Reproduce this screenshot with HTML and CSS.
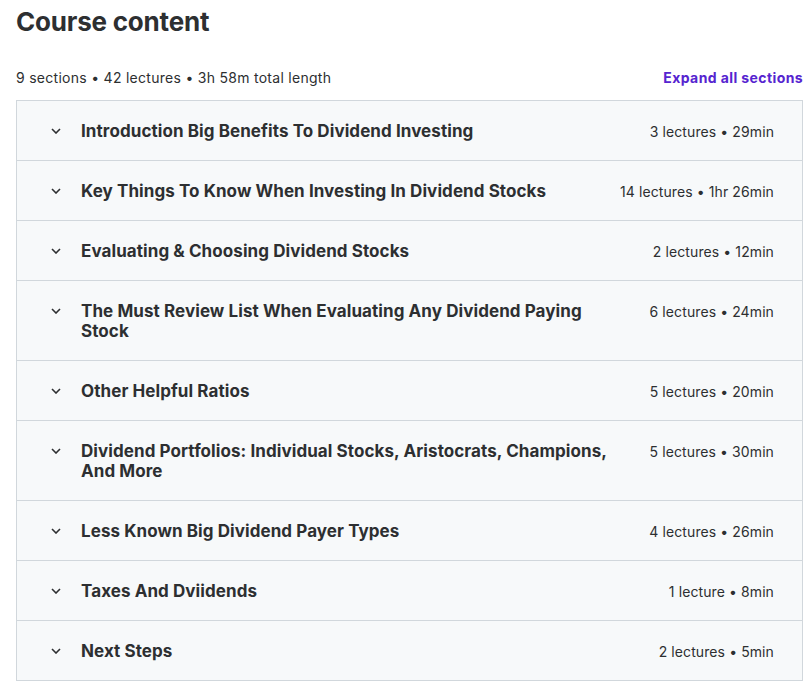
FILE: index.html
```html
<!DOCTYPE html>
<html>
<head>
<meta charset="utf-8">
<link rel="stylesheet" href="styles.css">
</head>
<body>
<div class="page">
  <h2 class="heading">Course content</h2>
  <div class="summary">
    <span class="stats">9 sections • 42 lectures • 3h 58m total length</span>
    <button class="expand">Expand all sections</button>
  </div>
  <div class="sections">
    <div class="section">
      <div class="left"><svg class="chev" viewBox="0 0 10 6" width="10" height="6"><path d="M1 1l4 4 4-4" fill="none" stroke="#2d2f31" stroke-width="1.6"/></svg><span class="title">Introduction Big Benefits To Dividend Investing</span></div>
      <span class="meta">3 lectures • 29min</span>
    </div>
    <div class="section">
      <div class="left"><svg class="chev" viewBox="0 0 10 6" width="10" height="6"><path d="M1 1l4 4 4-4" fill="none" stroke="#2d2f31" stroke-width="1.6"/></svg><span class="title">Key Things To Know When Investing In Dividend Stocks</span></div>
      <span class="meta">14 lectures • 1hr 26min</span>
    </div>
    <div class="section">
      <div class="left"><svg class="chev" viewBox="0 0 10 6" width="10" height="6"><path d="M1 1l4 4 4-4" fill="none" stroke="#2d2f31" stroke-width="1.6"/></svg><span class="title">Evaluating &amp; Choosing Dividend Stocks</span></div>
      <span class="meta">2 lectures • 12min</span>
    </div>
    <div class="section">
      <div class="left"><svg class="chev" viewBox="0 0 10 6" width="10" height="6"><path d="M1 1l4 4 4-4" fill="none" stroke="#2d2f31" stroke-width="1.6"/></svg><span class="title">The Must Review List When Evaluating Any Dividend Paying Stock</span></div>
      <span class="meta">6 lectures • 24min</span>
    </div>
    <div class="section">
      <div class="left"><svg class="chev" viewBox="0 0 10 6" width="10" height="6"><path d="M1 1l4 4 4-4" fill="none" stroke="#2d2f31" stroke-width="1.6"/></svg><span class="title">Other Helpful Ratios</span></div>
      <span class="meta">5 lectures • 20min</span>
    </div>
    <div class="section">
      <div class="left"><svg class="chev" viewBox="0 0 10 6" width="10" height="6"><path d="M1 1l4 4 4-4" fill="none" stroke="#2d2f31" stroke-width="1.6"/></svg><span class="title">Dividend Portfolios: Individual Stocks, Aristocrats, Champions, And More</span></div>
      <span class="meta">5 lectures • 30min</span>
    </div>
    <div class="section">
      <div class="left"><svg class="chev" viewBox="0 0 10 6" width="10" height="6"><path d="M1 1l4 4 4-4" fill="none" stroke="#2d2f31" stroke-width="1.6"/></svg><span class="title">Less Known Big Dividend Payer Types</span></div>
      <span class="meta">4 lectures • 26min</span>
    </div>
    <div class="section">
      <div class="left"><svg class="chev" viewBox="0 0 10 6" width="10" height="6"><path d="M1 1l4 4 4-4" fill="none" stroke="#2d2f31" stroke-width="1.6"/></svg><span class="title">Taxes And Dviidends</span></div>
      <span class="meta">1 lecture • 8min</span>
    </div>
    <div class="section">
      <div class="left"><svg class="chev" viewBox="0 0 10 6" width="10" height="6"><path d="M1 1l4 4 4-4" fill="none" stroke="#2d2f31" stroke-width="1.6"/></svg><span class="title">Next Steps</span></div>
      <span class="meta">2 lectures • 5min</span>
    </div>
  </div>
</div>
</body>
</html>
```
FILE: styles.css
```css
* { box-sizing: border-box; }
body {
  margin: 0;
  background: #fff;
  font-family: Inter, "Noto Sans", sans-serif;
  color: #2d2f31;
}
.page {
  width: 787px;
  margin-left: 16px;
  padding-top: 6px;
}
.heading {
  margin: 0;
  font-size: 26px;
  line-height: 32px;
  font-weight: 700;
  letter-spacing: -0.2px;
}
.summary {
  display: flex;
  justify-content: space-between;
  align-items: center;
  margin-top: 30px;
  margin-bottom: 12px;
  height: 20px;
}
.stats {
  font-size: 14px;
  line-height: 20px;
  letter-spacing: 0.28px;
}
.expand {
  border: 0;
  background: none;
  padding: 0;
  font-family: inherit;
  font-size: 14px;
  font-weight: 700;
  color: #5624d0;
  line-height: 20px;
  letter-spacing: 0.4px;
}
.sections {
  border: 1px solid #d1d7dc;
}
.section {
  display: flex;
  justify-content: space-between;
  align-items: flex-start;
  padding: 19.5px 28px 19.5px 34px;
  background: #f7f9fa;
  border-bottom: 1px solid #d1d7dc;
}
.section:last-child { border-bottom: 0; }
.left {
  display: flex;
  align-items: flex-start;
}
.chev {
  flex: none;
  margin-top: 7px;
  margin-right: 20px;
}
.title {
  max-width: 530px;
  font-size: 17px;
  line-height: 20px;
  font-weight: 700;
  letter-spacing: 0.08px;
}
.meta {
  flex: none;
  font-size: 14px;
  line-height: 19px;
  padding-top: 1px;
  padding-left: 40px;
  letter-spacing: 0.1px;
}
```
